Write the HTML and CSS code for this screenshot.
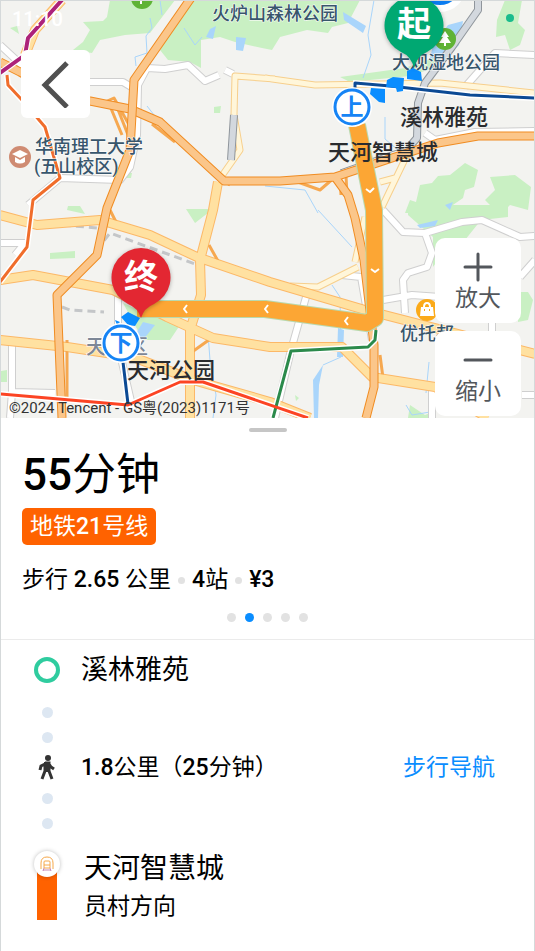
FILE: index.html
```html
<!DOCTYPE html>
<html lang="zh-CN">
<head>
    <meta charset="UTF-8">
    <meta name="viewport" content="width=device-width, initial-scale=1.0">
    <title>地铁21号线</title>
    <link rel="stylesheet" href="styles.css">
</head>
<body>

<div class="app">
    <div class="map">
        <svg class="map-canvas" viewBox="1 1 533 417" preserveAspectRatio="xMidYMid slice">
            <!-- parks -->
            <g class="park">
                <path d="M110 0L107 17 103 21 83 22 90 30 83 42 73 50 92 53 100 40 125 35 150 33 175 0Z"/>
                <path d="M190 0L160 50 168 60 190 62 201 68 201 40 220 37 235 42 262 48 272 50 280 37 307 30 328 33 332 27 348 23 360 0Z"/>
                <path d="M505 0L497 20 496 37 505 35 510 50 520 45 525 30 518 23 522 0Z"/>
                <path d="M405 213L410 200 416 202 420 185 432 183 438 176 450 175 465 163 478 170 474 187 465 190 463 198 450 207 448 213Z"/>
                <path d="M490 177L515 175 531 187 528 210 510 205 500 215 485 200 495 190Z"/>
                <path d="M408 205L508 205 508 217 481 220 465 240 445 250 433 267 433 237 408 215Z"/>
                <path d="M518 292L528 292 533 300 528 320 518 322Z"/>
                <path d="M123 303L150 315 180 325 170 340 143 340Z"/>
                <path d="M50 253L75 251 75 258 50 259Z"/>
                <path d="M67 210L85 214 80 206 68 206ZM186 209L213 209 195 223ZM10 28L17 26 19 34ZM214 107L221 106 220 113 214 113ZM126 173L132 173 131 178 126 178Z"/>
                <path d="M340 77L405 68 440 55 442 65 410 76 350 82ZM1 371L7 370 7 382 1 382ZM410 405L425 415 435 411 435 418 408 418ZM295 395L299 398 296 401Z"/>
            </g>

            <!-- water -->
            <path class="water-area" d="M313 380L323 365 319 385 318 418 314 418ZM338 328L344 330 343 357 337 357ZM236 37L246 38 243 51 236 50ZM210 29L216 26 213 39 206 37ZM343 12L366 26 363 33 344 20ZM417 225L438 220 435 226 420 228ZM445 205L453 202 450 210ZM143 322L155 325 143 340 133 338ZM448 25L463 21 459 45 445 60 430 58 433 45Z"/>
            <g class="water">
                <path d="M150 18L152 28 146 36 147 53 135 57 136 66"/>
                <path d="M374 0L368 35 371 55 363 78"/>
                <path d="M184 28L195 45 202 37M160 0L162 15M318 210L352 247M332 285L340 297 341 357 323 365"/>
                <path d="M147 106L158 120M265 186L305 190 318 213M208 334L210 360 216 395 213 418M429 362L426 393"/>
                <path d="M385 117L385 139 398 150M406 405L412 415 430 412M130 87L133 110"/>
            </g>

            <!-- minor roads -->
            <g class="road-case">
                <path id="minor" d="M90 82L123 82 133 88M147 68L165 69 188 65 205 81 219 75M225 70L233 74M147 68L138 85 137 135 130 167 120 180 60 178 28 205M465 87L495 53 535 55M425 133L435 140 475 132 535 131M383 210L403 232 425 233 462 222 482 220 520 237 535 236M425 233L432 253 427 267 408 273 403 280 405 313M383 300L412 295 440 297 520 300M308 290L291 350 275 418M12 343L12 392 55 393M12 392L10 418M0 243L25 243 15 255M118 293L118 345 133 410M432 390L432 418M522 395L535 395M520 277L535 260M342 275L361 277 372 340M0 45L25 68M492 320L492 340"/>
            </g>
            <use href="#minor" class="road-fill"/>
            <path class="rail-dash" d="M88 261L110 233 195 264M62 307L70 310 104 312M50 224L98 228"/>

            <!-- secondary roads -->
            <path class="pale-case" d="M275 79L235 76 234 115 240 150 219 180M265 78L315 85 440 83 535 93M408 153L382 207M358 267L318 287 290 286M365 217L355 262M380 182L395 178"/>
            <path class="pale" d="M275 79L235 76 234 115 240 150 219 180M265 78L315 85 440 83 535 93M408 153L382 207M358 267L318 287 290 286M365 217L355 262M380 182L395 178"/>
            <path class="yellow-case" d="M62 0L35 30 25 55M0 340L67 347 133 357 193 380 270 402 310 418M0 280L33 275 113 290 167 317 213 338 270 347 342 347 372 377 435 387 488 418M218 182L213 210 200 260 201 295 190 330 190 418M0 215L37 225 100 220 150 235 197 257 270 282 365 310 435 328 535 354"/>
            <path class="ramp" d="M209 245L218 261M110 210L117 224M67 340L67 400M192 352L213 337M380 355L383 378"/>
            <path class="yellow" d="M62 0L35 30 25 55M0 340L67 347 133 357 193 380 270 402 310 418M0 280L33 275 113 290 167 317 213 338 270 347 342 347 372 377 435 387 488 418M218 182L213 210 200 260 201 295 190 330 190 418M0 215L37 225 100 220 150 235 197 257 270 282 365 310 435 328 535 354"/>

            <!-- railway -->
            <path class="rail-case" d="M478 0L478 10 452 47 425 83 418 103 417 138 410 146M234 115L231 160"/>
            <path class="rail" d="M478 0L478 10 452 47 425 83 418 103 417 138 410 146M234 115L231 160"/>
            <path class="rail-end" d="M410 146L388 153 340 170"/>

            <!-- expressways -->
            <path class="ramp" d="M105 102L114 98 132 130M110 106L122 135M117 107L130 140M152 124L175 142M295 181L320 190 335 177M340 178L341 195M346 176L347 194M215 175L230 185"/>
            <path class="express-case" d="M0 62L20 72 55 92 90 101 130 109 160 122 224 181 280 181 335 177 392 158 438 143 478 136 535 136M335 177L348 195 355 218 364 260 374 345 374 387 366 418"/>
            <path class="express" d="M0 62L20 72 55 92 90 101 130 109 160 122 224 181 280 181 335 177 392 158 438 143 478 136 535 136M335 177L348 195 355 218 364 260 374 345 374 387 366 418"/>
            <path class="express-case" d="M191 -2L134 80 130 150 107 208 97 255 57 295 62 418"/>
            <path class="express" d="M191 -2L134 80 130 150 107 208 97 255 57 295 62 418"/>

            <!-- metro lines -->
            <path class="metro-case" d="M62 0L28 38 25 55 0 73M7 75L8 85 22 100 45 127 60 178 33 200 27 247 0 282M0 394L128 405 180 382 203 382 308 418M376 330L375 340 368 347 291 351 273 418M353 83L390 86 470 95 535 98M123 365L128 403"/>
            <path class="metro purple" d="M62 0L28 38 25 55 0 73"/>
            <path class="metro orange" d="M7 75L8 85 22 100 45 127 60 178 33 200 27 247 0 282"/>
            <path class="metro green" d="M376 330L375 340 368 347 291 351 273 418"/>
            <path class="metro red" d="M0 394L128 405 180 382 203 382 308 418"/>
            <path class="metro navy" d="M355 88L355 83 390 86 470 95 535 98M123 362L128 404"/>

            <!-- place names -->
            <g class="place">
                <text x="212" y="20">火炉山森林公园</text>
                <text x="392" y="69">大观湿地公园</text>
                <text x="35" y="153">华南理工大学</text>
                <text x="34" y="173">(五山校区)</text>
                <text x="400" y="340">优托邦</text>
                <text class="district" x="86" y="354">天</text>
                <text class="district" x="128" y="354">区</text>
            </g>
            <circle cx="20" cy="157" r="11" fill="#cf8b72"/>
            <path d="M12 154L20 150 28 154 20 158ZM15 157V162Q20 165 25 162V157L20 160Z" fill="#fff"/>
            <circle cx="427" cy="310" r="11" fill="#fbaa19"/>
            <path d="M421 307H433L434 316H420Z" fill="#fff"/>
            <path d="M424 307Q424 303 427 303T430 307" fill="none" stroke="#fff" stroke-width="2"/>
            <path d="M424 310h1M429 310h1" stroke="#fbaa19" stroke-width="2"/>
            <circle cx="445" cy="39" r="11" fill="#5fb336"/>
            <path d="M445 31L449 37H447L451 43H446V46H444V43H439L443 37H441Z" fill="#fff"/>
            <circle cx="142" cy="-2" r="11" fill="#5fb336"/>
            <path d="M139 0h6M141 0v4" stroke="#fff" stroke-width="2"/>

            <!-- route -->
            <path class="route-case" d="M357 125L374 210 375 318 367 323 265 309H137"/>
            <path class="route" d="M357 125L374 210 375 318 367 323 265 309H137"/>
            <path class="chevron" d="M366 189L370 192 374 188M371 269L375 272 379 269M348 317L345 321 348 325M268 305L265 309 268 313M187 305L184 309 187 313"/>
            <path class="walk" d="M407 71L413 68 421 72 422 81 407 79ZM387 80L393 77 404 78 403 91 397 92 396 88 386 87ZM371 88L385 89 385 103 379 102 370 94ZM121 317L128 312 140 318 135 326 128 325ZM115 320L120 322 117 325Z"/>

            <g class="station-name">
                <text x="400" y="125">溪林雅苑</text>
                <text x="328" y="160">天河智慧城</text>
                <text x="127" y="378">天河公园</text>
            </g>

            <!-- boarding points -->
            <circle cx="352" cy="107" r="20" fill="#fff"/>
            <circle class="ring" cx="352" cy="107" r="17"/>
            <text class="ring-text" x="352" y="115">上</text>
            <circle cx="121" cy="343" r="20" fill="#fff"/>
            <circle class="ring" cx="121" cy="343" r="17"/>
            <text class="ring-text" x="121" y="351">下</text>

            <!-- start and end pins -->
            <circle cx="440" cy="-14" r="26" fill="#fff"/>
            <circle cx="440" cy="-16" r="21" fill="#0a7cf0"/>
            <g class="pin">
                <path d="M414 68Q411 56 401 52A29.500 29.500 0 1 1 427 52Q417 56 414 68Z" fill="#00a872"/>
                <path d="M141 318Q138 308 128 304A29.500 29.500 0 1 1 154 304Q144 308 141 318Z" fill="#e32732"/>
            </g>
            <text class="pin-text" x="414" y="36">起</text>
            <text class="pin-text" x="141" y="289">终</text>

            <circle cx="510" cy="18" r="4" fill="#1abc8c"/>
            <text class="clock" x="12" y="26">11:10</text>
            <text class="credit" x="9" y="413">©2024 Tencent - GS粤(2023)1171号</text>
        </svg>

        <button class="back" type="button" aria-label="返回">
            <svg width="32" height="48" viewBox="0 0 32 48"><path d="M27 3L5 25 27 47"/></svg>
        </button>
        <div class="zoom">
            <button type="button">
                <svg width="30" height="30" viewBox="0 0 30 30"><path d="M2 15H28M15 2V28"/></svg>
                放大
            </button>
            <button type="button">
                <svg width="30" height="30" viewBox="0 0 30 30"><path d="M2 15H28"/></svg>
                缩小
            </button>
        </div>
    </div>

    <div class="summary">
        <div class="handle"></div>
        <h1><b>55</b>分钟</h1>
        <span class="line-badge">地铁<b>21</b>号线</span>
        <div class="facts">
            <span>步行 <b>2.65</b> 公里</span>
            <i></i>
            <span><b>4</b>站</span>
            <i></i>
            <span><b>¥3</b></span>
        </div>
        <div class="pager">
            <i></i><i class="active"></i><i></i><i></i><i></i>
        </div>
    </div>

    <div class="steps">
        <div class="step">
            <div class="mark"><span class="start-ring"></span></div>
            <h2>溪林雅苑</h2>
        </div>
        <div class="step walk-step">
            <div class="mark trail">
                <i></i>
                <i></i>
                <svg class="walker" width="18" height="22" viewBox="0 2 18 22">
                    <circle cx="10" cy="3" r="3"/>
                    <path d="M7 8L11 8 11 16 14 24M7 9L7 16 4 24M7 9L3 11 2 15M11 9L13 12 16 14"/>
                    <path class="torso" d="M6 7H12L12 17H6Z"/>
                </svg>
                <i></i>
                <i></i>
            </div>
            <p><b>1.8</b>公里（<b>25</b>分钟）</p>
            <a href="#walk">步行导航</a>
        </div>
        <div class="step ride-step">
            <div class="mark ride">
                <span class="train">
                    <svg width="14" height="16" viewBox="0 0 14 16">
                        <path d="M1 13V7Q1 1 7 1T13 7V13M4 6Q4 5 5 5H9Q10 5 10 6V12H4ZM4 9H10"/>
                        <path class="track" d="M4 12L3 15M10 12L11 15M3 14H11"/>
                    </svg>
                </span>
            </div>
            <div class="ride-text">
                <h2>天河智慧城</h2>
                <p>员村方向</p>
            </div>
        </div>
    </div>
</div>

</body>
</html>
```
FILE: styles.css
```css
* {
    box-sizing: border-box;
}

body {
    margin: 0;
    font-family: Roboto, "Noto Sans CJK SC", sans-serif;
    color: #000;
    background-color: #fff;
}

h1, h2, p {
    margin: 0;
}

b {
    font-weight: 500;
}

.app {
    min-height: 100vh;
    border: 1px solid #d5d9da;
}

/* map */
.map {
    position: relative;
    height: 417px;
    background-color: #f3f3f0;
    overflow: hidden;
}

.map-canvas {
    display: block;
    width: 100%;
    height: 100%;
}

.map-canvas path {
    stroke-linejoin: round;
}

.park { fill: #c9f0c3; }
.water-area { fill: #a9d5fb; }
.water { fill: none; stroke: #a9d5fb; stroke-width: 1; }
.road-case { fill: none; stroke: #cfcfcf; stroke-width: 8; }
.road-fill { fill: none; stroke: #fff; stroke-width: 6; }
.rail-dash { fill: none; stroke: #c4c6c8; stroke-width: 3; stroke-dasharray: 8 5; }
.rail-case { fill: none; stroke: #8f959b; stroke-width: 8; }
.rail { fill: none; stroke: #d3d8de; stroke-width: 6; }
.rail-end { fill: none; stroke: #8f959b; stroke-width: 1; }
.pale-case { fill: none; stroke: #f7cf8c; stroke-width: 7; }
.pale { fill: none; stroke: #fff6da; stroke-width: 5; }
.yellow-case { fill: none; stroke: #fcb867; stroke-width: 10; }
.yellow { fill: none; stroke: #ffe1a1; stroke-width: 8; }
.ramp { fill: none; stroke: #f6a850; stroke-width: 3; }
.express-case { fill: none; stroke: #f08c22; stroke-width: 9; }
.express { fill: none; stroke: #fbc68a; stroke-width: 7; }

.metro-case { fill: none; stroke: #fff; stroke-width: 6; }
.metro { fill: none; stroke-width: 3; }
.purple { stroke: #ad2279; stroke-width: 4; }
.orange { stroke: #f06d2b; }
.green { stroke: #2b8a4b; }
.red { stroke: #fc4424; }
.navy { stroke: #0c4a94; }

.route-case { fill: none; stroke: #b9d9ae; stroke-width: 18; }
.route { fill: none; stroke: #fca634; stroke-width: 16; }
.chevron { fill: none; stroke: #fff; stroke-width: 2; }
.walk { fill: #0a8dff; }

.place {
    font-size: 18px;
    font-weight: 500;
    fill: #38566c;
    stroke: #fff;
    stroke-width: 1px;
    paint-order: stroke;
}

.place .district {
    font-size: 20px;
    fill: #7d8797;
}

.station-name {
    font-size: 22px;
    font-weight: 500;
    fill: #292b2e;
}

.ring { fill: #fff; stroke: #1684f5; stroke-width: 3; }

.ring-text {
    font-size: 23px;
    font-weight: bold;
    fill: #1684f5;
    text-anchor: middle;
}

.pin {
    filter: drop-shadow(0 1px 2px rgba(0, 0, 0, 0.3));
}

.pin-text {
    font-size: 34px;
    font-weight: bold;
    fill: #fff;
    text-anchor: middle;
}

.clock { font-size: 20px; font-weight: 500; fill: #fff; }
.credit { font-size: 15px; fill: #333; }

button {
    padding: 0;
    border: none;
    background-color: #fff;
    font-family: inherit;
    cursor: pointer;
}

.back {
    position: absolute;
    top: 49px;
    left: 20px;
    width: 69px;
    height: 68px;
    border-radius: 6px;
}

.back svg {
    display: block;
    margin: 0 auto;
    fill: none;
    stroke: #505050;
    stroke-width: 5;
}

.zoom {
    position: absolute;
    right: 13px;
    bottom: 2px;
    display: flex;
    flex-direction: column;
    gap: 8px;
}

.zoom button {
    display: flex;
    flex-direction: column;
    align-items: center;
    justify-content: center;
    width: 86px;
    height: 85px;
    padding-top: 6px;
    border-radius: 10px;
    font-size: 23px;
    line-height: 34px;
    color: #53575c;
}

.zoom svg {
    fill: none;
    stroke: #53575c;
    stroke-width: 3;
    stroke-linecap: round;
}

/* trip summary */
.summary {
    padding: 10px 21px 17px;
    border-bottom: 1px solid #ebebeb;
}

.handle {
    width: 38px;
    height: 4px;
    margin: 0 auto;
    border-radius: 2px;
    background-color: #c6c6c6;
}

h1 {
    margin-top: 16px;
    font-size: 44px;
    font-weight: 400;
    line-height: 54px;
}

.line-badge {
    display: block;
    width: fit-content;
    margin-top: 6px;
    padding: 0 8px;
    border-radius: 5px;
    background-color: #ff6200;
    color: #fff;
    font-size: 23px;
    line-height: 37px;
}

.facts {
    display: flex;
    align-items: center;
    gap: 7px;
    margin-top: 18px;
    font-size: 23px;
    line-height: 34px;
}

.facts i {
    width: 7px;
    height: 7px;
    border-radius: 50%;
    background-color: #e2e2e2;
}

.pager {
    display: flex;
    justify-content: center;
    gap: 9px;
    margin-top: 16px;
}

.pager i {
    width: 9px;
    height: 9px;
    border-radius: 50%;
    background-color: #e2e2e2;
}

.pager .active {
    background-color: #0a8dff;
}

/* steps */
.steps {
    padding: 10px 39px 28px 32px;
}

.step {
    display: flex;
    align-items: center;
    gap: 20px;
}

.mark {
    display: flex;
    flex: none;
    justify-content: center;
    width: 28px;
}

h2 {
    font-size: 27px;
    font-weight: 400;
    line-height: 40px;
}

.step p {
    font-size: 23px;
    line-height: 36px;
}

.start-ring {
    width: 26px;
    height: 26px;
    border: 4px solid #2fcc9f;
    border-radius: 50%;
}

.walk-step {
    padding: 17px 0 20px;
}

.trail {
    flex-direction: column;
    align-items: center;
    gap: 14px;
}

.trail i {
    width: 11px;
    height: 11px;
    border-radius: 50%;
    background-color: #dde7f2;
}

.walker {
    overflow: visible;
    fill: #333;
    stroke: #333;
    stroke-width: 3;
}

.walker circle, .walker .torso {
    stroke: none;
}

.walker path {
    fill: none;
}

.walker .torso {
    fill: #333;
}

.walk-step a {
    margin-left: auto;
    color: #0a8dff;
    font-size: 23px;
    line-height: 36px;
    text-decoration: none;
}

.ride-step {
    gap: 23px;
    align-items: stretch;
}

.ride {
    background: linear-gradient(#ff6200, #ff6200) center bottom / 20px 50px no-repeat;
    height: 71px;
}

.train {
    display: flex;
    align-items: center;
    justify-content: center;
    width: 26px;
    height: 26px;
    margin-top: 2px;
    border-radius: 50%;
    background-color: #fff;
    box-shadow: 0 0 4px rgba(0, 0, 0, 0.25);
}

.train svg {
    fill: none;
    stroke: #f6a84b;
    stroke-width: 1;
}

.train .track {
    stroke: #c58bb5;
}

.ride-text h2 {
    font-size: 28px;
}
```
